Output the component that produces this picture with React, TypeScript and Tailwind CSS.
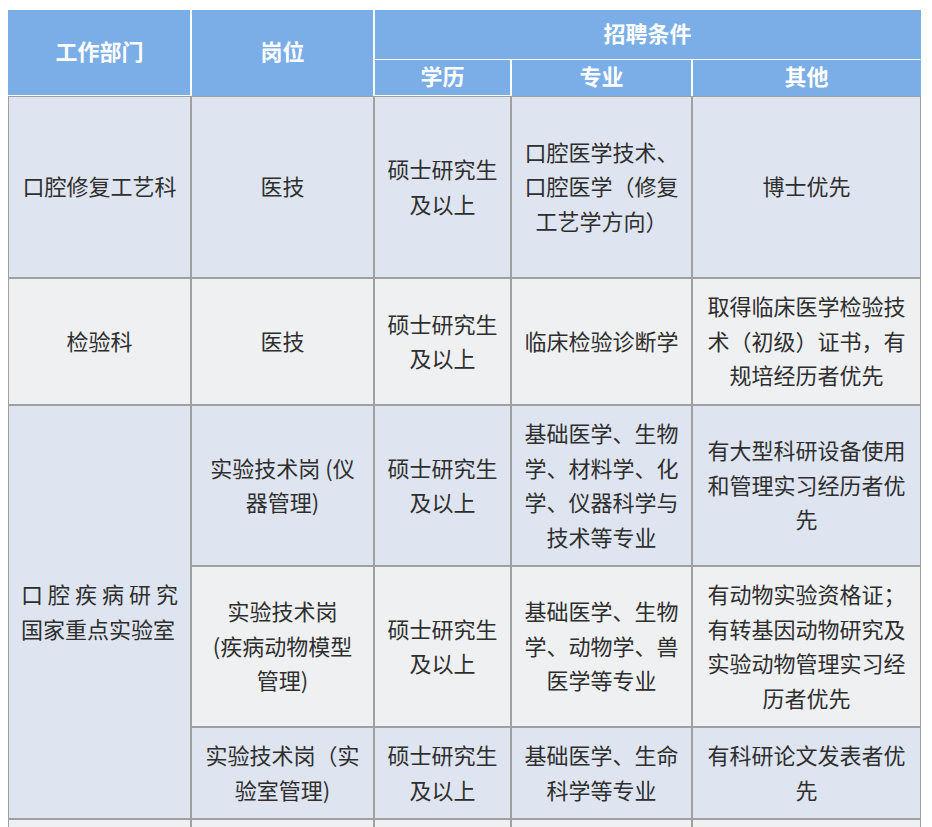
import React from 'react'

type Row = {
  dept?: string
  post: React.ReactNode
  edu: string
  major: string
  other: string
  bg: string
  h: string
}

const rows: Row[] = [
  {
    dept: '口腔修复工艺科',
    post: '医技',
    edu: '硕士研究生及以上',
    major: '口腔医学技术、口腔医学（修复工艺学方向）',
    other: '博士优先',
    bg: 'bg-[#dee5f0]',
    h: 'h-[182px]',
  },
  {
    dept: '检验科',
    post: '医技',
    edu: '硕士研究生及以上',
    major: '临床检验诊断学',
    other: '取得临床医学检验技术（初级）证书，有规培经历者优先',
    bg: 'bg-[#eff0f2]',
    h: 'h-[127px]',
  },
  {
    dept: 'lab',
    post: '实验技术岗 (仪器管理)',
    edu: '硕士研究生及以上',
    major: '基础医学、生物学、材料学、化学、仪器科学与技术等专业',
    other: '有大型科研设备使用和管理实习经历者优先',
    bg: 'bg-[#dee5f0]',
    h: 'h-[161px]',
  },
  {
    post: (
      <>
        实验技术岗
        <br />
        (疾病动物模型管理)
      </>
    ),
    edu: '硕士研究生及以上',
    major: '基础医学、生物学、动物学、兽医学等专业',
    other: '有动物实验资格证；有转基因动物研究及实验动物管理实习经历者优先',
    bg: 'bg-[#eff0f2]',
    h: 'h-[161px]',
  },
  {
    post: '实验技术岗（实验室管理)',
    edu: '硕士研究生及以上',
    major: '基础医学、生命科学等专业',
    other: '有科研论文发表者优先',
    bg: 'bg-[#dee5f0]',
    h: 'h-[92px]',
  },
]

function Th({ children, className = '' }: { children: React.ReactNode; className?: string }) {
  return (
    <div
      className={`flex items-center justify-center bg-[#7baee7] border-x border-x-white pb-[6px] text-white font-bold text-[22px] leading-[30px] ${className}`}
    >
      {children}
    </div>
  )
}

function Td({ children, className = '' }: { children?: React.ReactNode; className?: string }) {
  return (
    <div
      className={`flex items-center justify-center border border-[#a0a0a0] px-3 pb-[3px] text-center text-[22px] leading-[34.5px] text-[#2e2e2e] ${className}`}
    >
      <div className="w-full">{children}</div>
    </div>
  )
}

export default function App() {
  return (
    <div className="min-h-screen bg-white pl-[8px] pt-[10px] font-['Noto_Sans_CJK_SC','Noto_Sans',sans-serif]">
      <div className="grid w-[913px] grid-cols-[183px_183px_137px_181px_229px]">
        <Th className="row-span-2 h-[85px] border-l-[#7baee7]">工作部门</Th>
        <Th className="row-span-2">岗位</Th>
        <Th className="col-span-3 h-[50px] border-b border-b-white border-r-[#7baee7]">招聘条件</Th>
        <Th className="h-[35px]">学历</Th>
        <Th>专业</Th>
        <Th className="border-r-[#7baee7]">其他</Th>

        {rows.map((r, i) => (
          <React.Fragment key={i}>
            {r.dept === 'lab' ? (
              <Td className={`row-span-3 ${r.bg}`}>
                <div className="text-left">
                  <div className="[text-align-last:justify]">口腔疾病研究</div>
                  <div>国家重点实验室</div>
                </div>
              </Td>
            ) : r.dept ? (
              <Td className={r.bg}>{r.dept}</Td>
            ) : null}
            <Td className={`${r.bg} ${r.h}`}>{r.post}</Td>
            <Td className={r.bg}>{r.edu}</Td>
            <Td className={r.bg}>{r.major}</Td>
            <Td className={r.bg}>{r.other}</Td>
          </React.Fragment>
        ))}

        <Td className="h-[60px] bg-[#eff0f2]" />
        <Td className="bg-[#eff0f2]" />
        <Td className="bg-[#eff0f2]" />
        <Td className="bg-[#eff0f2]" />
        <Td className="bg-[#eff0f2]" />
      </div>
    </div>
  )
}
